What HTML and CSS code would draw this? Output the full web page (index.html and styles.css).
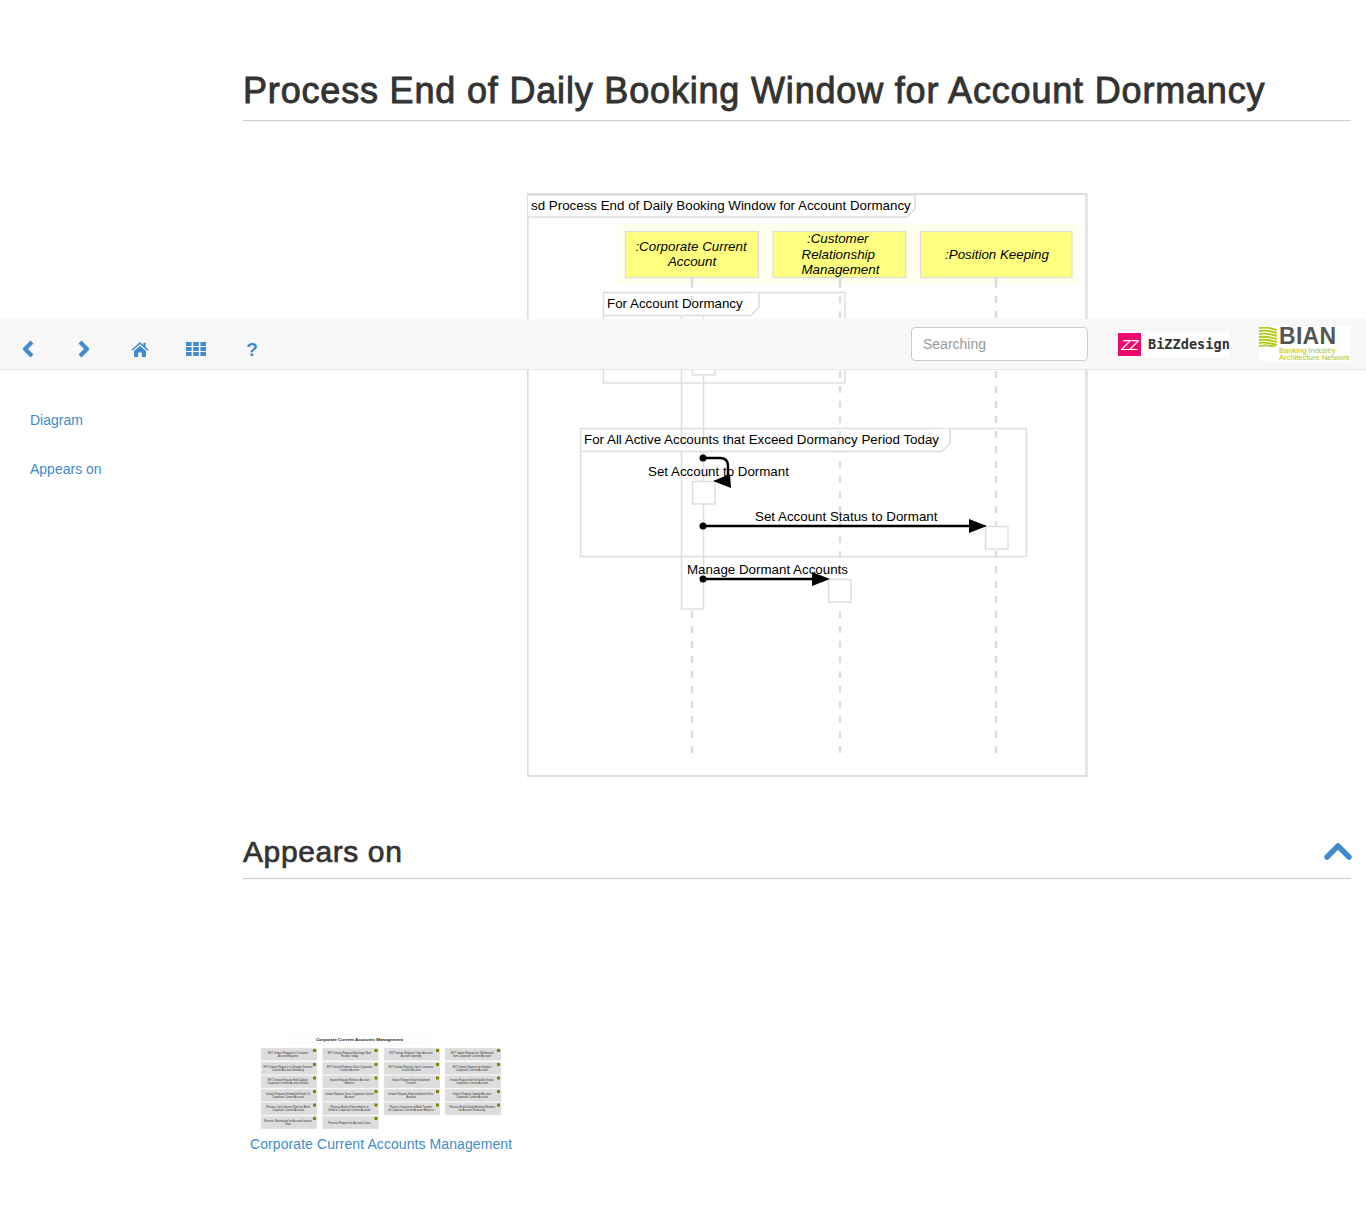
FILE: index.html
```html
<!DOCTYPE html>
<html lang="en">
<head>
<meta charset="UTF-8">
<meta name="viewport" content="width=device-width, initial-scale=1.0">
<title>Process End of Daily Booking Window for Account Dormancy</title>
<link rel="stylesheet" href="styles.css">
</head>
<body>
    <nav class="toolbar">
        <div class="tools">
            <a class="tool" href="#"><svg class="icon" viewBox="0 0 14 18"><path d="M11 2 L4 9 L11 16" class="chev"/></svg></a>
            <a class="tool" href="#"><svg class="icon" viewBox="0 0 14 18"><path d="M3 2 L10 9 L3 16" class="chev"/></svg></a>
            <a class="tool" href="#"><svg class="icon" viewBox="0 0 18 18"><path d="M9 2 L12.4 5 V2.8 H14.6 V7 L17.6 9.8 L16.6 10.8 L9 4.2 L1.4 10.8 L0.4 9.8 Z M3 11 L9 5.8 L15 11 V17 H10.8 V12.4 H7.2 V17 H3 Z" class="fill"/></svg></a>
            <a class="tool" href="#"><svg class="icon" viewBox="0 0 20 16"><path d="M0 1h5.6v4H0z M7.2 1h5.6v4H7.2z M14.4 1h5.6v4h-5.6z M0 6h5.6v4H0z M7.2 6h5.6v4H7.2z M14.4 6h5.6v4h-5.6z M0 11h5.6v4H0z M7.2 11h5.6v4H7.2z M14.4 11h5.6v4h-5.6z" class="fill"/></svg></a>
            <a class="tool help" href="#">?</a>
        </div>
        <input class="search" type="text" placeholder="Searching">
        <div class="logo-bizz">
            <span class="bizz-mark">ZZ</span>
            <span class="bizz-name">BiZZdesign</span>
        </div>
        <div class="logo-bian">
            <svg class="bian-mark" viewBox="0 0 18 20">
                <path d="M0 1 C6 0 12 1 18 3 M0 4 C6 3 12 4 18 6 M0 7 C6 6 12 7 18 9 M0 10 C6 9 11 10 18 12 M0 13 C6 12 11 13 18 15 M0 16 C5 15 11 16 18 18 M0 19 C5 18 10 18 16 20" class="bian-lines"/>
            </svg>
            <div class="bian-text">
                <div class="bian-name">BIAN</div>
                <div class="bian-sub">Banking Industry</div>
                <div class="bian-sub">Architecture Network</div>
            </div>
        </div>
    </nav>

    <div class="page">
        <aside class="side">
            <a class="side-link" href="#">Diagram</a>
            <a class="side-link" href="#">Appears on</a>
        </aside>

        <main class="content">
            <h1 class="title">Process End of Daily Booking Window for Account Dormancy</h1>

            <div class="diagram-wrap">
                <svg class="diagram" viewBox="527 193 561 584" width="561" height="584">
                    <rect class="frame" x="527.5" y="194" width="559" height="582"/>
                    <path class="tab" d="M528 195 H915 V209 L907 217 H528"/>
                    <text x="531" y="210">sd Process End of Daily Booking Window for Account Dormancy</text>

                    <rect class="pale" x="618" y="224" width="461" height="60"/>
                    <line class="life" x1="692" y1="281" x2="692" y2="753"/>
                    <line class="life" x1="840" y1="281" x2="840" y2="753"/>
                    <line class="life" x1="996" y1="281" x2="996" y2="753"/>
                    <line class="life-top" x1="692" y1="277" x2="692" y2="285"/>
                    <line class="life-top" x1="840" y1="277" x2="840" y2="285"/>
                    <line class="life-top" x1="996" y1="277" x2="996" y2="285"/>

                    <rect class="actor" x="625.5" y="231.5" width="133" height="46"/>
                    <rect class="actor" x="773" y="231.5" width="132.5" height="46"/>
                    <rect class="actor" x="920.5" y="231.5" width="151.5" height="46"/>
                    <text class="it mid" x="691" y="251">:Corporate Current</text>
                    <text class="it mid" x="692" y="266">Account</text>
                    <text class="it" x="807" y="243">:Customer</text>
                    <text class="it" x="801.5" y="259">Relationship</text>
                    <text class="it" x="801.5" y="274">Management</text>
                    <text class="it mid" x="997" y="259">:Position Keeping</text>

                    <rect class="box" x="681.5" y="315" width="22" height="294"/>

                    <rect class="loop" x="603.5" y="292.5" width="241.5" height="90.5"/>
                    <path class="tab" d="M603.5 315.5 H751 L759 307 V292.5"/>
                    <text x="607" y="308">For Account Dormancy</text>
                    <rect class="box" x="692.5" y="353" width="22.5" height="22"/>

                    <rect class="loop" x="580.5" y="428.5" width="446" height="128"/>
                    <path class="tab" d="M580.5 451.5 H942 L950 443 V428.5"/>
                    <text x="584" y="444">For All Active Accounts that Exceed Dormancy Period Today</text>

                    <rect class="box" x="692.5" y="481.5" width="22.5" height="22.5"/>
                    <path class="msg" d="M703 458 H720 Q728 458 728 466 V482"/>
                    <circle cx="703" cy="458" r="3.5"/>
                    <polygon points="713,481 731,488 730,474"/>
                    <text x="648" y="476">Set Account to Dormant</text>

                    <rect class="box" x="985.5" y="526.5" width="22.5" height="22.5"/>
                    <line class="msg" x1="703" y1="526" x2="972" y2="526"/>
                    <circle cx="703" cy="526" r="3.5"/>
                    <polygon points="969,519 987,526 969,533"/>
                    <text x="755" y="521">Set Account Status to Dormant</text>

                    <rect class="box" x="828.5" y="579.5" width="22.5" height="22.5"/>
                    <line class="msg" x1="703" y1="579" x2="815" y2="579"/>
                    <circle cx="703" cy="579" r="3.5"/>
                    <polygon points="812,572 830,579 812,586"/>
                    <text x="687" y="574">Manage Dormant Accounts</text>
                </svg>
            </div>

            <div class="section-head">
                <h2 class="section-title">Appears on</h2>
                <svg class="collapse" viewBox="0 0 28 18"><path d="M3 15 L14 4 L25 15"/></svg>
            </div>

            <a class="thumb" href="#">
                <svg class="thumb-img" viewBox="250 1034 262 96" width="262" height="96">
                    <rect class="t-title" x="289" y="1035" width="139" height="8"/>
                    <text class="t-head" x="359.5" y="1040.5">Corporate Current Accounts Management</text>

                    <g><rect class="t-card" x="261" y="1048" width="56" height="12.5"/><rect class="t-note" x="313" y="1049" width="3" height="3"/><text class="t-txt" x="288" y="1053.5">EVT Initiate Request to Customer</text><text class="t-txt" x="288" y="1056.5">Account Balance</text></g>
                    <g><rect class="t-card" x="322.5" y="1048" width="56" height="12.5"/><rect class="t-note" x="374.5" y="1049" width="3" height="3"/><text class="t-txt" x="349.5" y="1053.5">EVT Initiate Request Exchange Rate</text><text class="t-txt" x="349.5" y="1056.5">Position Today</text></g>
                    <g><rect class="t-card" x="384" y="1048" width="56" height="12.5"/><rect class="t-note" x="436" y="1049" width="3" height="3"/><text class="t-txt" x="411" y="1053.5">EVT Initiate Request Origin Account</text><text class="t-txt" x="411" y="1056.5">Account Opening</text></g>
                    <g><rect class="t-card" x="445" y="1048" width="56" height="12.5"/><rect class="t-note" x="497" y="1049" width="3" height="3"/><text class="t-txt" x="472" y="1053.5">EVT Initiate Request for Withdrawal</text><text class="t-txt" x="472" y="1056.5">from Corporate Current Account</text></g>

                    <g><rect class="t-card" x="261" y="1062" width="56" height="12.5"/><rect class="t-note" x="313" y="1063" width="3" height="3"/><text class="t-txt" x="288" y="1067.5">EVT Initiate Request to Change Dormant</text><text class="t-txt" x="288" y="1070.5">Current Account Dormancy</text></g>
                    <g><rect class="t-card" x="322.5" y="1062" width="56" height="12.5"/><rect class="t-note" x="374.5" y="1063" width="3" height="3"/><text class="t-txt" x="349.5" y="1067.5">EVT Initiate Request Close Corporate</text><text class="t-txt" x="349.5" y="1070.5">Current Account</text></g>
                    <g><rect class="t-card" x="384" y="1062" width="56" height="12.5"/><rect class="t-note" x="436" y="1063" width="3" height="3"/><text class="t-txt" x="411" y="1067.5">EVT Initiate Request Open Corporate</text><text class="t-txt" x="411" y="1070.5">Current Account</text></g>
                    <g><rect class="t-card" x="445" y="1062" width="56" height="12.5"/><rect class="t-note" x="497" y="1063" width="3" height="3"/><text class="t-txt" x="472" y="1067.5">EVT Initiate Request for Deposit</text><text class="t-txt" x="472" y="1070.5">Corporate Current Account</text></g>

                    <g><rect class="t-card" x="261" y="1075.5" width="56" height="12.5"/><rect class="t-note" x="313" y="1076.5" width="3" height="3"/><text class="t-txt" x="288" y="1081">EVT Initiate Request Bulk Update</text><text class="t-txt" x="288" y="1084">Corporate Current Account Details</text></g>
                    <g><rect class="t-card" x="322.5" y="1075.5" width="56" height="12.5"/><rect class="t-note" x="374.5" y="1076.5" width="3" height="3"/><text class="t-txt" x="349.5" y="1081">Initiate Request Retrieve Account</text><text class="t-txt" x="349.5" y="1084">Balance</text></g>
                    <g><rect class="t-card" x="384" y="1075.5" width="56" height="12.5"/><rect class="t-note" x="436" y="1076.5" width="3" height="3"/><text class="t-txt" x="411" y="1081">Initiate Request Stop Instalment</text><text class="t-txt" x="411" y="1084">Transfer</text></g>
                    <g><rect class="t-card" x="445" y="1075.5" width="56" height="12.5"/><rect class="t-note" x="497" y="1076.5" width="3" height="3"/><text class="t-txt" x="472" y="1081">Initiate Request Set Schedule Status</text><text class="t-txt" x="472" y="1084">Corporate Current Account</text></g>

                    <g><rect class="t-card" x="261" y="1089" width="56" height="12.5"/><rect class="t-note" x="313" y="1090" width="3" height="3"/><text class="t-txt" x="288" y="1094.5">Initiate Request Scheduled Funds To</text><text class="t-txt" x="288" y="1097.5">Corporate Current Account</text></g>
                    <g><rect class="t-card" x="322.5" y="1089" width="56" height="12.5"/><rect class="t-note" x="374.5" y="1090" width="3" height="3"/><text class="t-txt" x="349.5" y="1094.5">Initiate Request Close Corporate Current</text><text class="t-txt" x="349.5" y="1097.5">Account</text></g>
                    <g><rect class="t-card" x="384" y="1089" width="56" height="12.5"/><rect class="t-note" x="436" y="1090" width="3" height="3"/><text class="t-txt" x="411" y="1094.5">Initiate Request Stop Instalment Fees</text><text class="t-txt" x="411" y="1097.5">Account</text></g>
                    <g><rect class="t-card" x="445" y="1089" width="56" height="12.5"/><rect class="t-note" x="497" y="1090" width="3" height="3"/><text class="t-txt" x="472" y="1094.5">Initiate Request Update Account</text><text class="t-txt" x="472" y="1097.5">Corporate Current Account</text></g>

                    <g><rect class="t-card" x="261" y="1102.5" width="56" height="12.5"/><rect class="t-note" x="313" y="1103.5" width="3" height="3"/><text class="t-txt" x="288" y="1108">Process Cash Interest Rate for Bank</text><text class="t-txt" x="288" y="1111">Corporate Current Account</text></g>
                    <g><rect class="t-card" x="322.5" y="1102.5" width="56" height="12.5"/><rect class="t-note" x="374.5" y="1103.5" width="3" height="3"/><text class="t-txt" x="349.5" y="1108">Process Batch of Instruments to</text><text class="t-txt" x="349.5" y="1111">Debit to Corporate Current Account</text></g>
                    <g><rect class="t-card" x="384" y="1102.5" width="56" height="12.5"/><rect class="t-note" x="436" y="1103.5" width="3" height="3"/><text class="t-txt" x="411" y="1108">Process Instruction of Bulk Transfer</text><text class="t-txt" x="411" y="1111">of Corporate Current Account Balance</text></g>
                    <g><rect class="t-card" x="445" y="1102.5" width="56" height="12.5"/><rect class="t-note" x="497" y="1103.5" width="3" height="3"/><text class="t-txt" x="472" y="1108">Process End of Daily Booking Window</text><text class="t-txt" x="472" y="1111">for Account Dormancy</text></g>

                    <g><rect class="t-card" x="261" y="1116" width="56" height="13"/><rect class="t-note" x="313" y="1117" width="3" height="3"/><text class="t-txt" x="288" y="1121.5">Process Notification for Account Interest</text><text class="t-txt" x="288" y="1124.5">Rate</text></g>
                    <g><rect class="t-card" x="322.5" y="1116" width="56" height="13"/><rect class="t-note" x="374.5" y="1117" width="3" height="3"/><text class="t-txt" x="349.5" y="1124">Process Request for Account Close</text></g>
                </svg>
                <span class="thumb-label">Corporate Current Accounts Management</span>
            </a>
        </main>
    </div>
</body>
</html>
```

FILE: styles.css
```css
body {
    font-family: "Liberation Sans", Arial, sans-serif;
    font-size: 14px;
    color: #333;
    margin: 0;
    background: #fff;
}
a {
    color: #428bca;
    text-decoration: none;
}

/* toolbar */
.toolbar {
    position: absolute;
    top: 319px;
    left: 0;
    right: 0;
    height: 50px;
    z-index: 5;
    display: flex;
    align-items: center;
    padding-right: 15px;
    background-color: #f8f8f8;
    border-bottom: 1px solid #e7e7e7;
}
.tools {
    display: flex;
    align-items: center;
    height: 100%;
    margin-right: auto;
    padding-top: 10px;
    box-sizing: border-box;
}
.tool {
    display: flex;
    justify-content: center;
    width: 56px;
    font-size: 19px;
    line-height: 18px;
}
.icon {
    height: 18px;
    width: 20px;
    display: block;
}
.chev {
    fill: none;
    stroke: #428bca;
    stroke-width: 4.2;
    stroke-linejoin: round;
}
.fill {
    fill: #428bca;
}
.help {
    font-weight: bold;
    padding-top: 1px;
}
.search {
    width: 177px;
    height: 34px;
    box-sizing: border-box;
    padding: 6px 11px;
    font-family: inherit;
    font-size: 14px;
    background: #fff;
    border: 1px solid #ccc;
    border-radius: 4px;
    margin-top: -1px;
}
.search::placeholder {
    color: #999;
    opacity: 1;
}
.logo-bizz {
    display: flex;
    flex: none;
    align-items: center;
    width: 112px;
    height: 25px;
    margin-left: 30px;
    background: #fff;
}
.bizz-mark {
    flex: none;
    width: 23px;
    height: 23px;
    line-height: 23px;
    text-align: center;
    background: #ec0a6c;
    color: #fff;
    font-size: 15px;
    letter-spacing: -1px;
    font-style: italic;
}
.bizz-name {
    margin-left: 7px;
    font-family: "DejaVu Sans Mono", monospace;
    font-weight: bold;
    font-size: 13.6px;
    color: #333;
}
.logo-bian {
    display: flex;
    flex: none;
    width: 92px;
    height: 35px;
    margin-left: 29px;
    margin-top: -2px;
    background: #fff;
}
.bian-mark {
    width: 18px;
    height: 20px;
    margin-top: 1px;
    flex: none;
}
.bian-lines {
    fill: none;
    stroke: #b5c91a;
    stroke-width: 1.9;
}
.bian-text {
    margin-left: 2px;
    white-space: nowrap;
}
.bian-name {
    font-size: 23px;
    line-height: 20px;
    height: 21px;
    font-weight: bold;
    color: #555;
    letter-spacing: 0.3px;
}
.bian-sub {
    font-size: 7.6px;
    line-height: 7px;
    color: #b5c400;
}

/* page layout */
.page {
    display: flex;
    min-height: 1219px;
}
.side {
    width: 243px;
    flex: none;
    box-sizing: border-box;
    padding: 410px 0 0 30px;
}
.side-link {
    display: block;
    height: 49px;
    line-height: 20px;
}
.content {
    width: 1108px;
}
.title {
    margin: 0;
    padding: 69px 0 7px;
    font-size: 36px;
    line-height: 44px;
    font-weight: normal;
    letter-spacing: 0.82px;
    -webkit-text-stroke: 0.9px #333;
    color: #333;
    border-bottom: 1px solid #ccc;
}
.diagram-wrap {
    padding: 72px 0 0 284px;
}
.diagram {
    display: block;
}
.diagram text {
    font-family: "Liberation Sans", Arial, sans-serif;
    font-size: 13.35px;
    fill: #000;
}
.diagram text.it {
    font-style: italic;
}
.diagram text.mid {
    text-anchor: middle;
}
.frame {
    fill: #fff;
    stroke: #ddd;
    stroke-width: 2.2;
}
.tab {
    fill: #fff;
    stroke: #ddd;
    stroke-width: 1.5;
}
.pale {
    fill: #ffffee;
}
.actor {
    fill: #ffff80;
    stroke: #ddd;
    stroke-width: 1.3;
}
.life {
    stroke: #ddd;
    stroke-width: 2.4;
    stroke-dasharray: 7 8;
}
.life-top {
    stroke: #ddd;
    stroke-width: 2.4;
}
.box {
    fill: #fff;
    stroke: #ddd;
    stroke-width: 1.4;
}
.loop {
    fill: none;
    stroke: #ddd;
    stroke-width: 1.4;
}
.msg {
    fill: none;
    stroke: #000;
    stroke-width: 2.4;
}

/* appears on */
.section-head {
    display: flex;
    justify-content: space-between;
    align-items: center;
    margin-top: 52px;
    height: 49px;
    border-bottom: 1px solid #ccc;
}
.section-title {
    margin: 0 0 4px;
    font-size: 30px;
    line-height: 45px;
    font-weight: normal;
    letter-spacing: 0.6px;
    -webkit-text-stroke: 0.7px #333;
    color: #333;
}
.collapse {
    width: 28px;
    height: 18px;
    margin: 0 -1px 6px 0;
}
.collapse path {
    fill: none;
    stroke: #428bca;
    stroke-width: 5.5;
    stroke-linecap: round;
    stroke-linejoin: round;
}
.thumb {
    display: block;
    width: 262px;
    margin: 155px 0 0 7px;
}
.thumb-img {
    display: block;
}
.thumb-label {
    display: block;
    margin-top: 4px;
    line-height: 20px;
    letter-spacing: 0.08px;
    white-space: nowrap;
}
.t-title {
    fill: #fff;
    stroke: #f0f0f0;
    stroke-width: 0.5;
}
.t-head {
    font-size: 4.4px;
    font-weight: bold;
    fill: #222;
    text-anchor: middle;
}
.t-card {
    fill: #dcdcdc;
    stroke: #eee;
    stroke-width: 0.5;
}
.t-note {
    fill: #8a7f00;
}
.t-txt {
    font-size: 2.7px;
    fill: #333;
    text-anchor: middle;
}
```
